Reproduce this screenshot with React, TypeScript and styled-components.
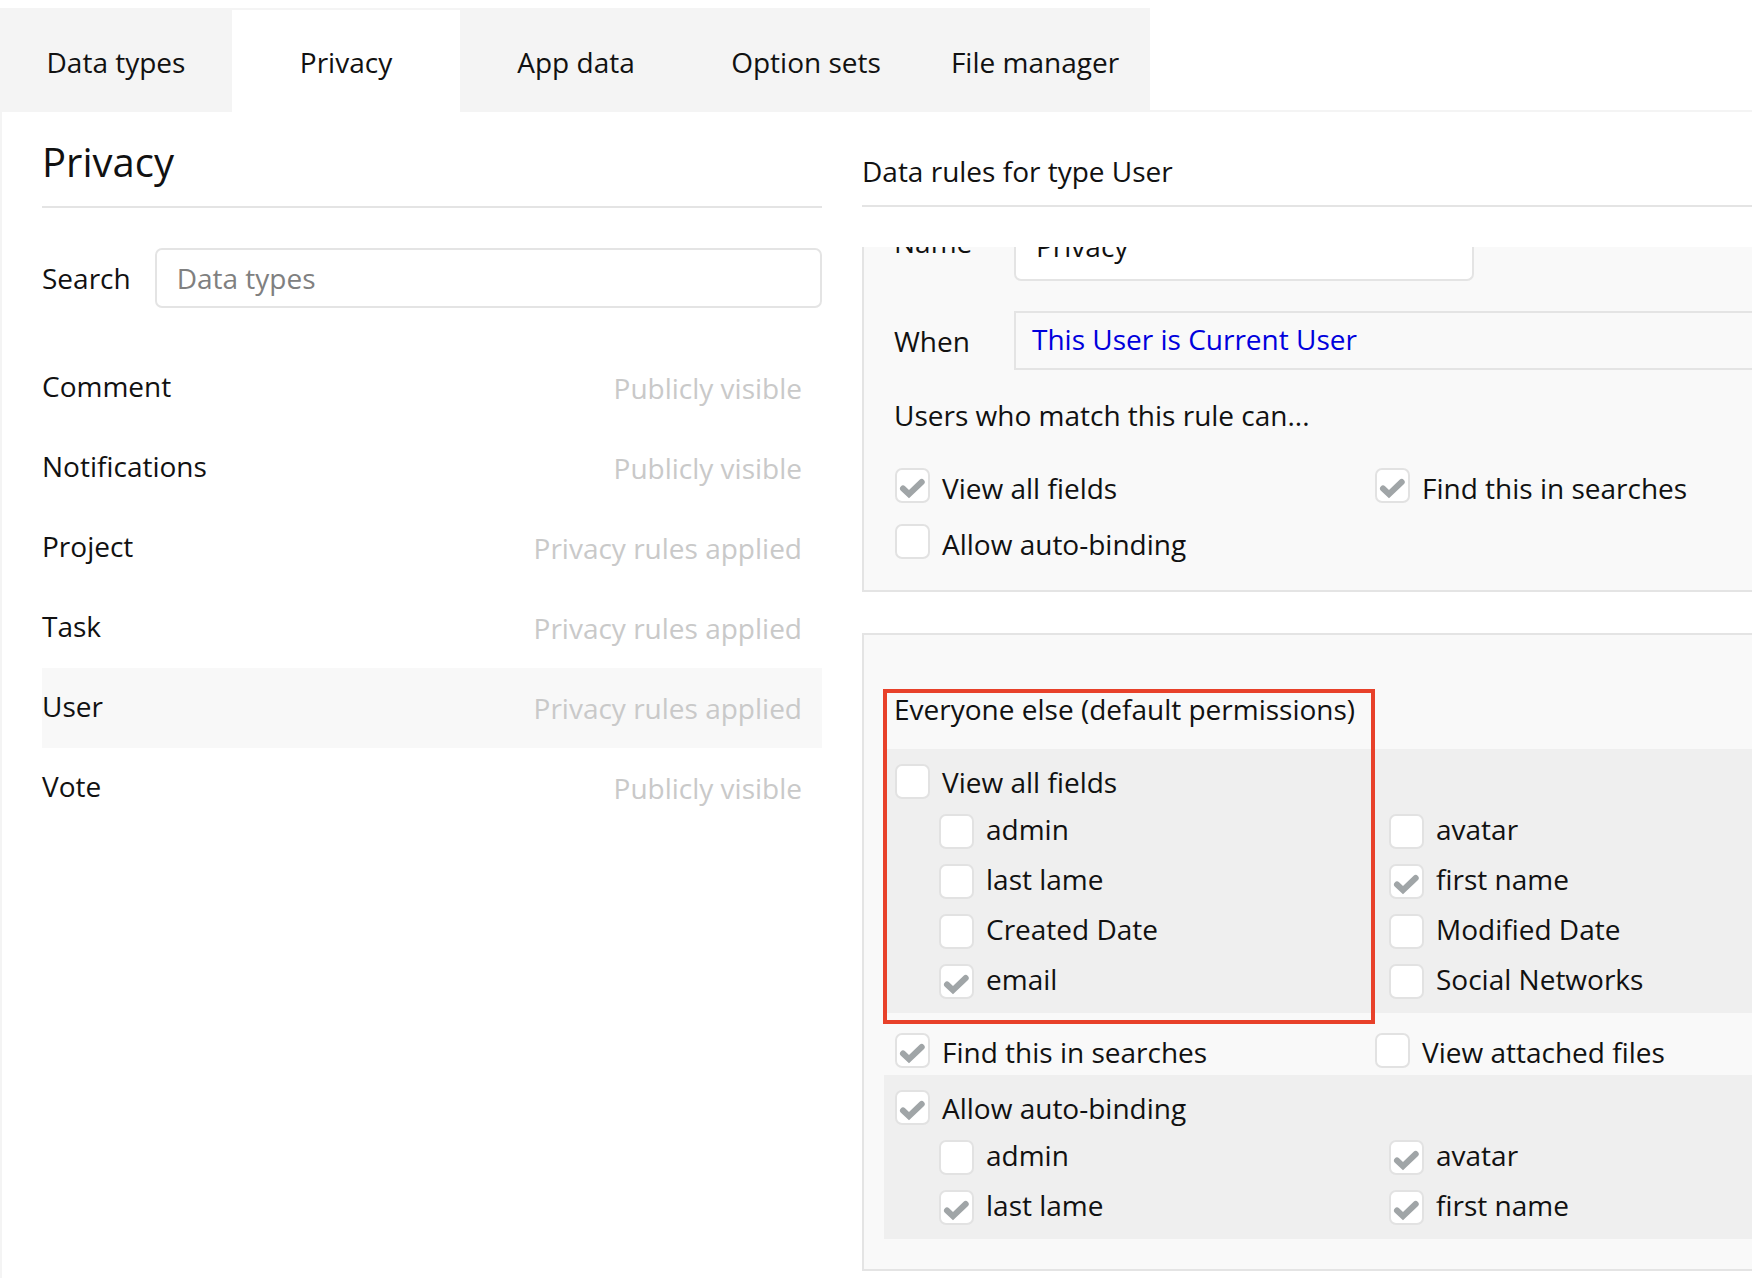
import React from 'react';
import styled, { createGlobalStyle } from 'styled-components';

const GlobalStyle = createGlobalStyle`
  html, body {
    margin: 0;
    padding: 0;
    background: #fff;
    overflow: hidden;
  }
  body {
    font-family: "Open Sans", "Noto Sans", sans-serif;
    font-size: 28px;
    color: #111;
  }
`;

const Page = styled.div`
  width: 1752px;
  height: 1278px;
  overflow: hidden;
  padding-top: 8px;
  box-sizing: border-box;
`;

const TabBar = styled.div`
  display: flex;
  align-items: flex-start;
  height: 104px;
  border-bottom: 2px solid #f4f4f4;
  box-sizing: border-box;
`;

const Tabs = styled.div`
  display: flex;
  width: 1150px;
  height: 104px;
  flex: none;
  background: #f4f4f4;
`;

const Tab = styled.div<{ $active?: boolean; $width: number }>`
  width: ${(p) => p.$width}px;
  box-sizing: border-box;
  display: flex;
  align-items: center;
  justify-content: center;
  margin-top: ${(p) => (p.$active ? '2px' : '0')};
  padding-top: ${(p) => (p.$active ? '1px' : '3px')};
  background: ${(p) => (p.$active ? '#fff' : 'transparent')};
`;

const Body = styled.div`
  display: flex;
  height: 1166px;
  border-left: 2px solid #f4f4f4;
  padding-left: 40px;
`;

const LeftColumn = styled.div`
  width: 780px;
  flex: none;
`;

const PageTitle = styled.div`
  height: 96px;
  box-sizing: border-box;
  border-bottom: 2px solid #e4e4e4;
  font-size: 40px;
  line-height: 54px;
  padding-top: 23px;
`;

const SearchRow = styled.div`
  display: flex;
  align-items: center;
  gap: 24px;
  margin-top: 40px;
  margin-bottom: 40px;
`;

const SearchInput = styled.div`
  flex: 1;
  height: 60px;
  box-sizing: border-box;
  border: 2px solid #e4e4e4;
  border-radius: 7px;
  padding-left: 20px;
  display: flex;
  align-items: center;
  color: #808080;
`;

const TypeRow = styled.div<{ $selected?: boolean }>`
  height: 80px;
  box-sizing: border-box;
  display: flex;
  align-items: center;
  justify-content: space-between;
  padding-right: 20px;
  padding-bottom: 4px;
  background: ${(p) => (p.$selected ? '#f8f8f8' : 'transparent')};
`;

const TypeStatus = styled.span`
  color: #c9c9c9;
  padding-top: 4px;
`;

const RightColumn = styled.div`
  flex: 1;
  min-width: 0;
  margin-left: 40px;
  display: flex;
  flex-direction: column;
`;

const RulesTitle = styled.div`
  height: 95px;
  box-sizing: border-box;
  border-bottom: 2px solid #e4e4e4;
  padding-top: 37px;
  line-height: 44px;
`;

const ScrollArea = styled.div`
  flex: 1;
  margin-top: 40px;
  overflow: hidden;
`;

const ScrollContent = styled.div`
  margin-top: -26px;
`;

const Panel = styled.div`
  background: #f9f9f9;
  border: 2px solid #e4e4e4;
  border-right: none;
  box-sizing: border-box;
`;

const TopPanel = styled(Panel)`
  height: 371px;
  border-top: none;
  padding-left: 30px;
`;

const BottomPanel = styled(Panel)`
  height: 638px;
  margin-top: 41px;
  padding-top: 50px;
`;

const FieldRow = styled.div`
  display: flex;
  align-items: center;
`;

const ConditionRow = styled(FieldRow)`
  margin-top: 30px;
`;

const NameLabel = styled.div`
  width: 120px;
  flex: none;
  padding-bottom: 19px;
`;

const WhenLabel = styled.div`
  width: 120px;
  flex: none;
`;

const NameInput = styled.div`
  width: 460px;
  height: 60px;
  box-sizing: border-box;
  background: #fff;
  border: 2px solid #e4e4e4;
  border-top: none;
  border-radius: 0 0 7px 7px;
  padding-left: 20px;
  padding-bottom: 8px;
  display: flex;
  align-items: center;
`;

const ConditionInput = styled.div`
  flex: 1;
  height: 59px;
  box-sizing: border-box;
  border: 2px solid #e4e4e4;
  border-right: none;
  padding-left: 16px;
  padding-bottom: 3px;
  display: flex;
  align-items: center;
  color: #0000dd;
`;

const RuleCaption = styled.div`
  margin-top: 26px;
  line-height: 38px;
`;

const OptionGrid = styled.div`
  display: grid;
  grid-template-columns: 480px 1fr;
  row-gap: 21px;
  margin-top: 34px;
`;

const Option = styled.label`
  display: flex;
  align-items: center;
  gap: 12px;
  height: 35px;
`;

const OptionText = styled.span<{ $offset: number }>`
  margin-top: ${(p) => p.$offset}px;
  line-height: 38px;
`;

const Box = styled.span`
  width: 35px;
  height: 35px;
  flex: none;
  margin-left: 1px;
  box-sizing: border-box;
  border: 2px solid #e2e2e2;
  border-radius: 7px;
  background: #fff;
  display: flex;
  align-items: center;
  justify-content: center;
`;

const Legend = styled.div`
  height: 64px;
  box-sizing: border-box;
  padding-left: 30px;
  padding-top: 2px;
  line-height: 44px;
`;

const FieldGroup = styled.div`
  background: #efefef;
  margin-left: 20px;
  padding: 15px 0 14px 10px;
`;

const SubFields = styled.div`
  display: grid;
  grid-template-columns: 450px 1fr;
  row-gap: 15px;
  margin-top: 15px;
  margin-left: 44px;
`;

const PlainOptions = styled(OptionGrid)`
  margin: 20px 0 7px;
  padding-left: 30px;
`;

const HighlightAnchor = styled.div`
  position: relative;
`;

const Highlight = styled.div`
  position: absolute;
  left: 19px;
  top: 4px;
  width: 492px;
  height: 335px;
  box-sizing: border-box;
  border: 4px solid #e8412a;
  pointer-events: none;
`;

const tabs = [
  { label: 'Data types', width: 232 },
  { label: 'Privacy', width: 228, active: true },
  { label: 'App data', width: 232 },
  { label: 'Option sets', width: 228 },
  { label: 'File manager', width: 230 },
];

const types = [
  { name: 'Comment', status: 'Publicly visible' },
  { name: 'Notifications', status: 'Publicly visible' },
  { name: 'Project', status: 'Privacy rules applied' },
  { name: 'Task', status: 'Privacy rules applied' },
  { name: 'User', status: 'Privacy rules applied', selected: true },
  { name: 'Vote', status: 'Publicly visible' },
];

const CheckMark = () => (
  <svg width="35" height="35" viewBox="0 0 35 35" style={{ flex: 'none', margin: '-2px' }}>
    <path d="M8 20.5l6 5.7L26.7 14" fill="none" stroke="#a0a5a7" strokeWidth="6" strokeLinecap="round" strokeLinejoin="miter" />
  </svg>
);

const CheckOption = ({ label, checked, offset = 5 }: { label: string; checked?: boolean; offset?: number }) => (
  <Option>
    <Box>{checked && <CheckMark />}</Box>
    <OptionText $offset={offset}>{label}</OptionText>
  </Option>
);

const SubOption = ({ label, checked }: { label: string; checked?: boolean }) => (
  <CheckOption label={label} checked={checked} offset={-6} />
);

const App = () => (
  <Page>
    <GlobalStyle />
    <TabBar>
      <Tabs>
        {tabs.map((t) => (
          <Tab key={t.label} $active={t.active} $width={t.width}>{t.label}</Tab>
        ))}
      </Tabs>
    </TabBar>
    <Body>
      <LeftColumn>
        <PageTitle>Privacy</PageTitle>
        <SearchRow>
          Search
          <SearchInput>Data types</SearchInput>
        </SearchRow>
        {types.map((t) => (
          <TypeRow key={t.name} $selected={t.selected}>
            {t.name}
            <TypeStatus>{t.status}</TypeStatus>
          </TypeRow>
        ))}
      </LeftColumn>
      <RightColumn>
        <RulesTitle>Data rules for type User</RulesTitle>
        <ScrollArea>
          <ScrollContent>
            <TopPanel>
              <FieldRow>
                <NameLabel>Name</NameLabel>
                <NameInput>Privacy</NameInput>
              </FieldRow>
              <ConditionRow>
                <WhenLabel>When</WhenLabel>
                <ConditionInput>This User is Current User</ConditionInput>
              </ConditionRow>
              <RuleCaption>Users who match this rule can...</RuleCaption>
              <OptionGrid>
                <CheckOption label="View all fields" checked />
                <CheckOption label="Find this in searches" checked />
                <CheckOption label="Allow auto-binding" />
              </OptionGrid>
            </TopPanel>
            <BottomPanel>
              <HighlightAnchor>
                <Highlight />
              </HighlightAnchor>
              <Legend>Everyone else (default permissions)</Legend>
              <FieldGroup>
                <CheckOption label="View all fields" offset={1} />
                <SubFields>
                  <SubOption label="admin" />
                  <SubOption label="avatar" />
                  <SubOption label="last lame" />
                  <SubOption label="first name" checked />
                  <SubOption label="Created Date" />
                  <SubOption label="Modified Date" />
                  <SubOption label="email" checked />
                  <SubOption label="Social Networks" />
                </SubFields>
              </FieldGroup>
              <PlainOptions>
                <CheckOption label="Find this in searches" checked offset={3} />
                <CheckOption label="View attached files" offset={3} />
              </PlainOptions>
              <FieldGroup>
                <CheckOption label="Allow auto-binding" checked offset={1} />
                <SubFields>
                  <SubOption label="admin" />
                  <SubOption label="avatar" checked />
                  <SubOption label="last lame" checked />
                  <SubOption label="first name" checked />
                </SubFields>
              </FieldGroup>
            </BottomPanel>
          </ScrollContent>
        </ScrollArea>
      </RightColumn>
    </Body>
  </Page>
);

export default App;
